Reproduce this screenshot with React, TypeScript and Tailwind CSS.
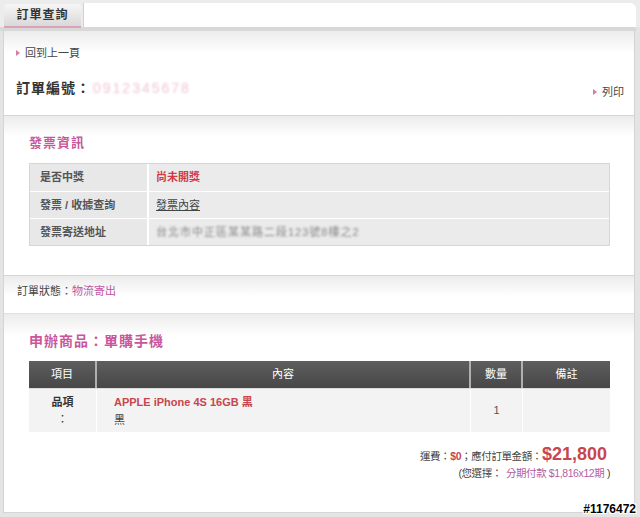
import React from "react";

const font = { fontFamily: '"Liberation Sans", "Noto Sans CJK TC", sans-serif' };

function Arrow() {
  return (
    <span className="inline-block w-0 h-0 border-y-[3.5px] border-y-transparent border-l-[4px] border-l-[#d77aa4] mr-[5px] align-middle" />
  );
}

export default function App() {
  return (
    <div className="w-[640px] h-[517px] bg-[#e4e4e4] overflow-hidden relative text-[#444]" style={font}>
      {/* tab bar */}
      <div className="flex h-[27px] pt-[3px] pl-[4px] pr-[4px] bg-[#ececec]">
        <div className="w-[77px] h-[24px] mt-[1px] rounded-tl-[3px] rounded-tr-[2px] bg-[linear-gradient(to_bottom,#f6f6f6,#d9d9d9)] border-b-[2px] border-[#d9a2b9] flex items-center justify-center text-[12px] font-bold text-[#333] tracking-[1px]">
          訂單查詢
        </div>
        <div className="flex-1 h-[24px] bg-white rounded-tr-[6px] ml-[2px] border-l border-[#d0d0d0]" />
      </div>
      <div className="h-[4px] bg-[#d8d8d8] mr-[4px]" />

      {/* panel */}
      <div className="ml-[3px] mr-[5px] border-x border-[#d4d4d4] bg-white">
        {/* section 1 */}
        <div className="h-[84px] bg-[linear-gradient(to_bottom,#ececec,#fff_22px)] px-[12px] pt-[15px] relative">
          <div className="flex items-center text-[11px] text-[#444] h-[14px]">
            <Arrow />
            回到上一頁
          </div>
          <div className="flex items-center justify-between mt-[16px]">
            <div className="flex items-center">
              <span className="text-[14px] font-bold text-[#333] tracking-[1px]">訂單編號：</span>
              <span className="text-[14px] text-[#f0c6d6] blur-[1.2px] tracking-[2px] ml-[2px]">0912345678</span>
            </div>
            <div className="flex items-center text-[11px] text-[#444] mt-[8px] mr-[-2px]">
              <Arrow />
              列印
            </div>
          </div>
        </div>
        <div className="h-px bg-[#d6d6d6]" />

        {/* section 2 */}
        <div className="h-[159px] bg-[linear-gradient(to_bottom,#ececec,#fff_20px)] pl-[25px] pr-[24px] pt-[18px]">
          <div className="text-[13px] font-bold text-[#c9569a] h-[17px] leading-[17px] tracking-[1px]">發票資訊</div>
          <div className="mt-[12px] border border-[#d6d6d6] bg-white">
            {[
              ["是否中獎", <span className="font-bold text-[#d23a44]">尚未開獎</span>],
              ["發票 / 收據查詢", <span className="underline text-[#444]">發票內容</span>],
              [
                "發票寄送地址",
                <span className="text-[#888] blur-[1px] tracking-[1px]">台北市中正區某某路二段123號8樓之2</span>,
              ],
            ].map(([label, val], i) => (
              <div key={i} className={`flex h-[27px] ${i > 0 ? "border-t border-white" : ""}`}>
                <div className="w-[119px] bg-[#e8e8e8] border-r-[2px] border-white flex items-center pl-[10px] text-[11px] font-bold text-[#555]">
                  {label}
                </div>
                <div className="flex-1 bg-[#ebebeb] flex items-center pl-[7px] text-[11px]">{val}</div>
              </div>
            ))}
          </div>
        </div>
        <div className="h-px bg-[#d6d6d6]" />

        {/* section 3 status */}
        <div className="h-[37px] bg-[linear-gradient(to_bottom,#ececec,#fff_20px)] pl-[13px] pt-[7px] text-[11px] text-[#444]">
          訂單狀態：<span className="text-[#c055a0]">物流寄出</span>
        </div>
        <div className="h-px bg-[#e0e0e0]" />

        {/* section 4 */}
        <div className="h-[198px] bg-[linear-gradient(to_bottom,#ececec,#fff_22px)] pl-[25px] pr-[24px] pt-[18px]">
          <div className="text-[14px] font-bold text-[#c9569a] h-[18px] leading-[18px] tracking-[1px]">申辦商品：單購手機</div>
          <div className="mt-[11px]">
            <div className="flex h-[27px] bg-[linear-gradient(to_bottom,#5e5e5e,#474747)] text-white text-[11px]">
              <div className="w-[68px] flex items-center justify-center border-r-[2px] border-[#b0b0b0]">項目</div>
              <div className="w-[374px] flex items-center justify-center border-r-[2px] border-[#b0b0b0]">內容</div>
              <div className="w-[52px] flex items-center justify-center border-r-[2px] border-[#b0b0b0]">數量</div>
              <div className="flex-1 flex items-center justify-center">備註</div>
            </div>
            <div className="flex h-[44px] bg-[#f3f3f3] text-[11px] border-t border-[#ddd]">
              <div className="w-[68px] flex flex-col items-center justify-center text-[#333] leading-[17px] border-r border-white">
                <span className="font-bold">品項</span>
                <span>：</span>
              </div>
              <div className="w-[374px] flex flex-col justify-center pl-[17px] leading-[18px] border-r border-white">
                <span className="font-bold text-[#c8464e]">APPLE iPhone 4S 16GB 黑</span>
                <span className="text-[#444]">黑</span>
              </div>
              <div className="w-[52px] flex items-center justify-center text-[#555] border-r border-white">1</div>
              <div className="flex-1" />
            </div>
          </div>
          <div className="mt-[12px] flex flex-col items-end pr-[3px] text-[10.5px] text-[#444] tracking-[-0.4px]">
            <div className="flex items-baseline">
              <span>運費：</span>
              <span className="font-bold text-[#c8464e]">$0</span>
              <span>；應付訂單金額：</span>
              <span className="text-[18px] font-bold text-[#c8464e] leading-[20px] tracking-normal">$21,800</span>
            </div>
            <div className="mt-[1px] mr-[-3px]">
              (您選擇：<span className="text-[#b65ca2] ml-[4px]">分期付款 $1,816x12期</span> )
            </div>
          </div>
        </div>
        <div className="h-px bg-[#d6d6d6]" />
      </div>

      <div
        className="absolute right-[4px] bottom-[1px] text-[12px] font-bold text-black leading-[13px]"
        style={{ textShadow: "1px 0 #fff, -1px 0 #fff, 0 1px #fff, 0 -1px #fff, 1px 1px #fff, -1px -1px #fff, 1px -1px #fff, -1px 1px #fff" }}
      >
        #1176472
      </div>
    </div>
  );
}
